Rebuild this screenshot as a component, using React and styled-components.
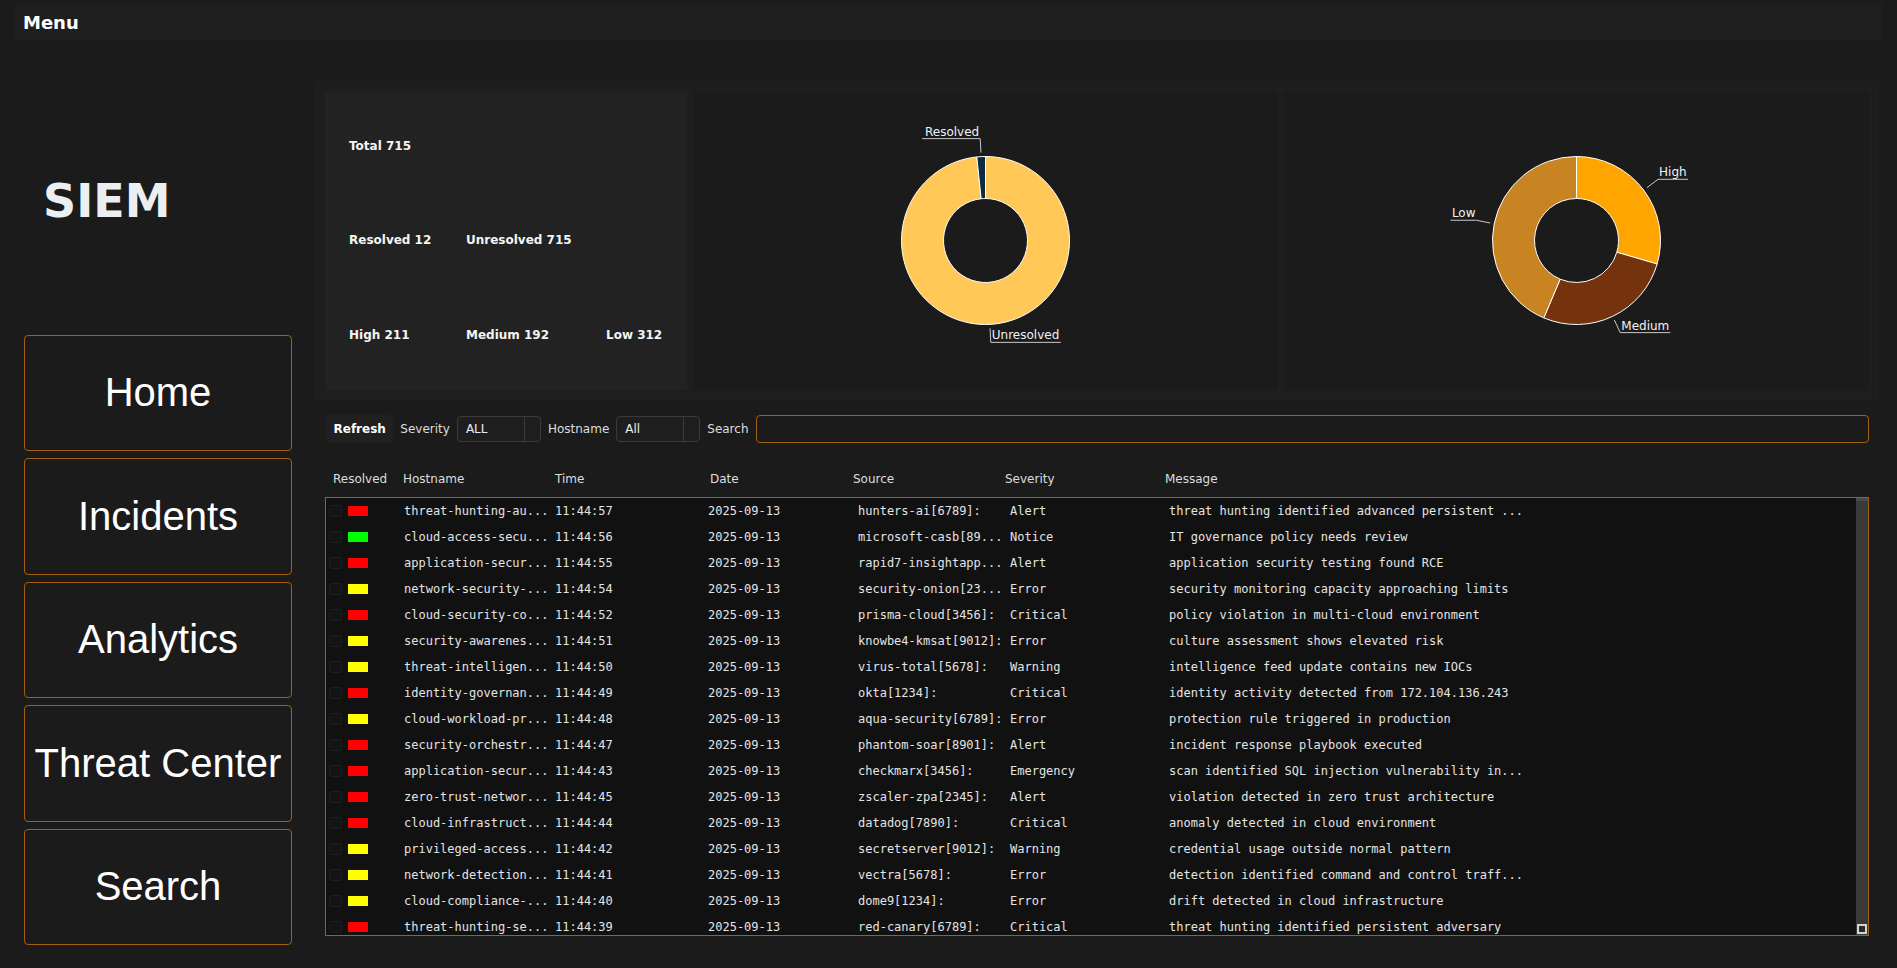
import styled, { createGlobalStyle } from 'styled-components';

const ORANGE = '#a0600f';

const GlobalStyle = createGlobalStyle`
  html, body { margin: 0; padding: 0; background: #1b1b1b; }
  body { font-family: "DejaVu Sans", Verdana, sans-serif; color: #eee; overflow: hidden; }
  * { box-sizing: border-box; }
`;

const Shell = styled.div`min-height: 100vh; padding-top: 4px;`;
const MenuBar = styled.div`
  margin: 0 15px;
  height: 36px;
  background: #1f1f1f;
  display: flex;
  align-items: center;
  padding-left: 8px;
  font-size: 18px;
  font-weight: 700;
  color: #fff;
`;
const Layout = styled.div`display: flex; padding-right: 18px;`;

const Sidebar = styled.nav`
  flex: 0 0 315px;
  padding: 138px 23px 0 24px;
  display: flex;
  flex-direction: column;
`;
const Logo = styled.div`
  font-size: 46px;
  font-weight: 700;
  line-height: 46px;
  color: #eceff1;
  padding-left: 19px;
  margin-bottom: 110.5px;
`;
const NavList = styled.div`display: flex; flex-direction: column; gap: 7px;`;
const NavButton = styled.button`
  width: 268px;
  height: 116.5px;
  background: #1b1b1b;
  border: 1px solid ${ORANGE};
  border-radius: 4px;
  color: #fff;
  font-family: "Liberation Sans", Arial, sans-serif;
  font-size: 40px;
  cursor: pointer;
`;

const Main = styled.main`flex: 1; min-width: 0; padding-top: 41px;`;
const Panel = styled.section`
  display: flex;
  gap: 6px;
  padding: 10px;
  height: 319px;
  background: #1e1e1e;
`;
const StatsCard = styled.div`
  flex: 0 0 362px;
  background: #222;
  padding: 8px 24px;
  display: grid;
  grid-template-columns: 117px 140px auto;
  grid-template-rows: repeat(3, 1fr);
  align-items: center;
  font-size: 12px;
  font-weight: 700;
  color: #f4f4f4;
`;
const Stat = styled.div`grid-row: ${p => p.$row}; grid-column: ${p => p.$col};`;
const ChartCard = styled.div`flex: 1; background: #1b1b1b; display: flex;`;

const Section = styled.section`padding: 0 10px;`;
const Toolbar = styled.div`
  display: flex;
  align-items: center;
  gap: 7px;
  height: 28px;
  margin-top: 15px;
`;
const RefreshButton = styled.button`
  height: 28px;
  margin-left: 1px;
  padding: 0 7.5px;
  border: none;
  border-radius: 4px;
  background: #202020;
  color: #fff;
  font-family: inherit;
  font-size: 12px;
  font-weight: 700;
`;
const Label = styled.span`font-size: 12px; color: #ddd;`;
const SelectBox = styled.div`
  display: flex;
  width: 84px;
  height: 26px;
  border: 1px solid #3a3a3a;
  border-radius: 4px;
  background: #1e1e1e;
  font-size: 12px;
  color: #eee;
`;
const SelectValue = styled.span`flex: 1; padding-left: 8px; line-height: 24px;`;
const SelectIndicator = styled.span`width: 16px; border-left: 1px solid #3a3a3a;`;
const SearchInput = styled.input`
  flex: 1;
  height: 28px;
  border: 1px solid ${ORANGE};
  border-radius: 4px;
  background: #1b1b1b;
  color: #eee;
  font-family: inherit;
  font-size: 12px;
  padding: 0 8px;
  outline: none;
`;

const HeaderRow = styled.div`
  display: grid;
  grid-template-columns: 70px 152px 155px 143px 152px 160px 1fr;
  padding-left: 8px;
  margin-top: 28px;
  line-height: 16px;
  font-size: 12px;
  color: #ddd;
`;
const TableBody = styled.div`
  display: flex;
  margin-top: 10px;
  height: 439px;
  border: 1px solid ${ORANGE};
  background: #111;
`;
const RowList = styled.div`flex: 1; min-width: 0; overflow: hidden;`;
const ScrollTrack = styled.div`
  flex: 0 0 12px;
  display: flex;
  flex-direction: column;
  justify-content: space-between;
  align-items: center;
  background: #3a3a3a;
  border-top: 3px solid #4a4a4a;
  padding-bottom: 1px;
`;
const ScrollButton = styled.span`
  width: 10px;
  height: 10px;
  border: 2px solid #d4d4d4;
  background: #2b2b2b;
`;
const Row = styled.div`
  display: grid;
  grid-template-columns: 78px 151px 153px 150px 152px 159px 1fr;
  height: 26px;
  align-items: center;
  font-family: "DejaVu Sans Mono", "Liberation Mono", monospace;
  font-size: 12px;
  color: #e4e4e4;
  white-space: nowrap;
`;
const ResolvedCell = styled.div`display: flex; align-items: center; gap: 6px; padding-left: 3px;`;
const Check = styled.span`
  width: 13px;
  height: 12px;
  background: #141414;
  border: 1px solid #1e1e1e;
  border-radius: 2px;
`;
const Flag = styled.span`width: 20px; height: 10px; background: ${p => p.$color};`;

const FLAG = { red: '#ff0000', green: '#00ff00', yellow: '#ffff00' };

const rows = [
  ['red', 'threat-hunting-au...', '11:44:57', 'hunters-ai[6789]:', 'Alert', 'threat hunting identified advanced persistent ...'],
  ['green', 'cloud-access-secu...', '11:44:56', 'microsoft-casb[89...', 'Notice', 'IT governance policy needs review'],
  ['red', 'application-secur...', '11:44:55', 'rapid7-insightapp...', 'Alert', 'application security testing found RCE'],
  ['yellow', 'network-security-...', '11:44:54', 'security-onion[23...', 'Error', 'security monitoring capacity approaching limits'],
  ['red', 'cloud-security-co...', '11:44:52', 'prisma-cloud[3456]:', 'Critical', 'policy violation in multi-cloud environment'],
  ['yellow', 'security-awarenes...', '11:44:51', 'knowbe4-kmsat[9012]:', 'Error', 'culture assessment shows elevated risk'],
  ['yellow', 'threat-intelligen...', '11:44:50', 'virus-total[5678]:', 'Warning', 'intelligence feed update contains new IOCs'],
  ['red', 'identity-governan...', '11:44:49', 'okta[1234]:', 'Critical', 'identity activity detected from 172.104.136.243'],
  ['yellow', 'cloud-workload-pr...', '11:44:48', 'aqua-security[6789]:', 'Error', 'protection rule triggered in production'],
  ['red', 'security-orchestr...', '11:44:47', 'phantom-soar[8901]:', 'Alert', 'incident response playbook executed'],
  ['red', 'application-secur...', '11:44:43', 'checkmarx[3456]:', 'Emergency', 'scan identified SQL injection vulnerability in...'],
  ['red', 'zero-trust-networ...', '11:44:45', 'zscaler-zpa[2345]:', 'Alert', 'violation detected in zero trust architecture'],
  ['red', 'cloud-infrastruct...', '11:44:44', 'datadog[7890]:', 'Critical', 'anomaly detected in cloud environment'],
  ['yellow', 'privileged-access...', '11:44:42', 'secretserver[9012]:', 'Warning', 'credential usage outside normal pattern'],
  ['yellow', 'network-detection...', '11:44:41', 'vectra[5678]:', 'Error', 'detection identified command and control traff...'],
  ['yellow', 'cloud-compliance-...', '11:44:40', 'dome9[1234]:', 'Error', 'drift detected in cloud infrastructure'],
  ['red', 'threat-hunting-se...', '11:44:39', 'red-canary[6789]:', 'Critical', 'threat hunting identified persistent adversary'],
];

const statusData = [
  { label: 'Unresolved', value: 715, color: '#ffc857', len: 70 },
  { label: 'Resolved', value: 12, color: '#0d2b40', len: 58 },
];
const severityData = [
  { label: 'High', value: 211, color: '#ffa500', len: 30 },
  { label: 'Medium', value: 192, color: '#74330d', len: 50 },
  { label: 'Low', value: 312, color: '#c88322', len: 26 },
];

const CX = 292.5, CY = 149.5, R0 = 42, R1 = 84;
const pt = (r, a) => {
  const t = (a * Math.PI) / 180;
  return [CX + r * Math.sin(t), CY - r * Math.cos(t)];
};

function Donut({ data }) {
  const total = data.reduce((s, d) => s + d.value, 0);
  let acc = 0;
  const slices = data.map(d => {
    const a0 = (acc / total) * 360;
    acc += d.value;
    const a1 = (acc / total) * 360;
    const large = a1 - a0 > 180 ? 1 : 0;
    const [ox0, oy0] = pt(R1, a0), [ox1, oy1] = pt(R1, a1);
    const [ix1, iy1] = pt(R0, a1), [ix0, iy0] = pt(R0, a0);
    const path = `M${ox0},${oy0} A${R1},${R1} 0 ${large} 1 ${ox1},${oy1} L${ix1},${iy1} A${R0},${R0} 0 ${large} 0 ${ix0},${iy0} Z`;
    const mid = (a0 + a1) / 2;
    const right = Math.sin((mid * Math.PI) / 180) >= 0;
    const p1 = pt(88, mid), p2 = pt(102, mid);
    const p3 = [p2[0] + (right ? d.len : -d.len), p2[1]];
    return { ...d, path, right, p1, p2, p3 };
  });
  return (
    <svg width="100%" height="100%" viewBox="0 0 585 299">
      {slices.map(s => (
        <path key={s.label} d={s.path} fill={s.color} stroke="#fff" strokeWidth="1" />
      ))}
      {slices.map(s => (
        <g key={s.label + '-l'}>
          <polyline
            points={`${s.p1.join(',')} ${s.p2.join(',')} ${s.p3.join(',')}`}
            fill="none"
            stroke="#c8c8c8"
            strokeWidth="1"
          />
          <text
            x={s.right ? s.p2[0] + 1 : s.p2[0] - 1}
            y={s.p2[1] - 3}
            textAnchor={s.right ? 'start' : 'end'}
            fontFamily="DejaVu Sans, sans-serif"
            fontSize="12"
            fill="#eef2f6"
          >
            {s.label}
          </text>
        </g>
      ))}
    </svg>
  );
}

function Select({ value }) {
  return (
    <SelectBox>
      <SelectValue>{value}</SelectValue>
      <SelectIndicator />
    </SelectBox>
  );
}

export default function App() {
  return (
    <Shell>
      <GlobalStyle />
      <MenuBar>Menu</MenuBar>
      <Layout>
        <Sidebar>
          <Logo>SIEM</Logo>
          <NavList>
            {['Home', 'Incidents', 'Analytics', 'Threat Center', 'Search'].map(n => (
              <NavButton key={n}>{n}</NavButton>
            ))}
          </NavList>
        </Sidebar>
        <Main>
          <Panel>
            <StatsCard>
              <Stat $row={1} $col={1}>Total 715</Stat>
              <Stat $row={2} $col={1}>Resolved 12</Stat>
              <Stat $row={2} $col={2}>Unresolved 715</Stat>
              <Stat $row={3} $col={1}>High 211</Stat>
              <Stat $row={3} $col={2}>Medium 192</Stat>
              <Stat $row={3} $col={3}>Low 312</Stat>
            </StatsCard>
            <ChartCard><Donut data={statusData} /></ChartCard>
            <ChartCard><Donut data={severityData} /></ChartCard>
          </Panel>
          <Section>
            <Toolbar>
              <RefreshButton>Refresh</RefreshButton>
              <Label>Severity</Label>
              <Select value="ALL" />
              <Label>Hostname</Label>
              <Select value="All" />
              <Label>Search</Label>
              <SearchInput />
            </Toolbar>
            <HeaderRow>
              <span>Resolved</span>
              <span>Hostname</span>
              <span>Time</span>
              <span>Date</span>
              <span>Source</span>
              <span>Severity</span>
              <span>Message</span>
            </HeaderRow>
            <TableBody>
              <RowList>
                {rows.map((r, i) => (
                  <Row key={i}>
                    <ResolvedCell>
                      <Check />
                      <Flag $color={FLAG[r[0]]} />
                    </ResolvedCell>
                    <span>{r[1]}</span>
                    <span>{r[2]}</span>
                    <span>2025-09-13</span>
                    <span>{r[3]}</span>
                    <span>{r[4]}</span>
                    <span>{r[5]}</span>
                  </Row>
                ))}
              </RowList>
              <ScrollTrack>
                <span />
                <ScrollButton />
              </ScrollTrack>
            </TableBody>
          </Section>
        </Main>
      </Layout>
    </Shell>
  );
}
